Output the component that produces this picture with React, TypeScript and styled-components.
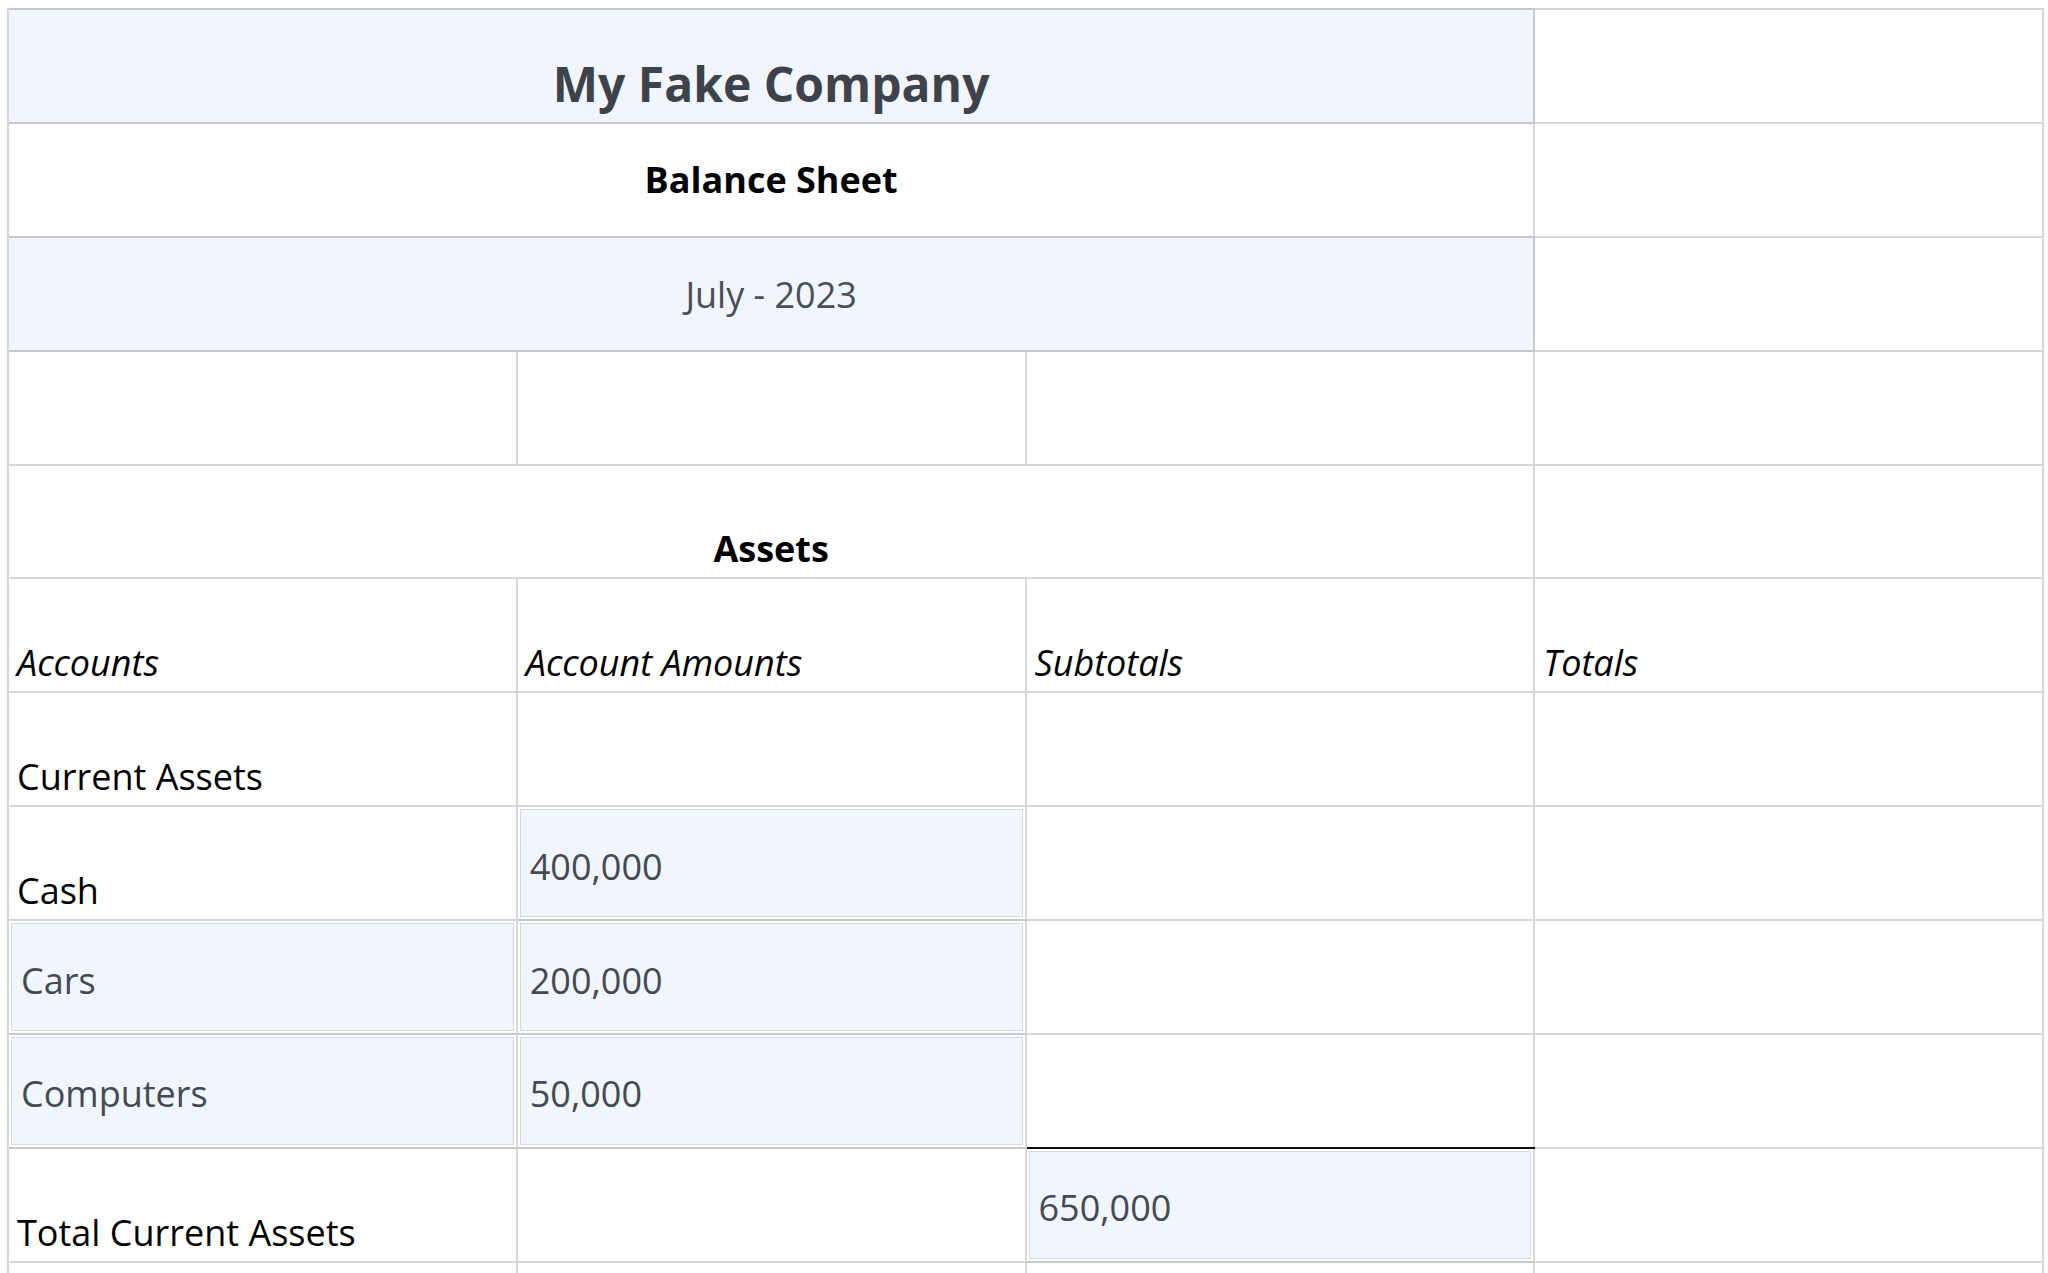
import React from 'react';
import styled, { createGlobalStyle } from 'styled-components';

const LINE = '#d8d8d8';
const DARK_LINE = '#c6c8cc';
const SHADE = '#f1f5fe';

const Global = createGlobalStyle`
  html, body { margin: 0; padding: 0; background: #ffffff; }
  body { font-family: "Open Sans", "Liberation Sans", sans-serif; }
`;

const Sheet = styled.div`
  display: grid;
  grid-template-columns: repeat(4, 508.75px);
  grid-auto-rows: 113.9px;
  width: max-content;
  margin: 8px 0 0 7px;
  border-top: 2px solid ${LINE};
  border-left: 2px solid ${LINE};
`;

type CellProps = {
  $span?: number;
  $v?: 'center' | 'bottom';
  $h?: 'left' | 'center';
  $tone?: 'plain' | 'header';
  $bare?: boolean;
  $rule?: boolean;
  $padTop?: number;
  $padBottom?: number;
};

const Cell = styled.div<CellProps>`
  grid-column: span ${(p) => p.$span ?? 1};
  box-sizing: border-box;
  min-width: 0;
  display: flex;
  align-items: ${(p) => (p.$v === 'center' ? 'center' : 'flex-end')};
  justify-content: ${(p) => (p.$h === 'center' ? 'center' : 'flex-start')};
  padding: ${(p) =>
    p.$bare ? '0' : `${p.$padTop ?? 0}px 8px ${p.$padBottom ?? 4}px 8px`};
  background: ${(p) => (p.$tone === 'header' ? SHADE : '#ffffff')};
  border-right: 2px solid ${(p) => (p.$tone === 'header' ? DARK_LINE : LINE)};
  border-bottom: 2px solid ${(p) => (p.$tone === 'header' || p.$bare ? DARK_LINE : LINE)};
  box-shadow: ${(p) =>
    p.$rule ? '0 -2px 0 #111111' : p.$tone === 'header' ? `0 -2px 0 ${DARK_LINE}` : 'none'};
`;

const Title = styled.span`
  font-size: 48px;
  font-weight: 700;
  color: #3e424b;
  white-space: nowrap;
`;

const Heading = styled.span`
  font-size: 36px;
  font-weight: 700;
  color: #000000;
  white-space: nowrap;
`;

const Period = styled.span`
  font-size: 36px;
  font-weight: 400;
  color: #4a4e58;
  white-space: nowrap;
`;

const Label = styled.span<{ $italic?: boolean }>`
  font-size: 36px;
  font-weight: 400;
  font-style: ${(p) => (p.$italic ? 'italic' : 'normal')};
  color: #000000;
  white-space: nowrap;
`;

const Field = styled.div`
  flex: 1;
  align-self: stretch;
  box-sizing: border-box;
  margin: 2px;
  border: 1px solid #d4d8df;
  background: ${SHADE};
  display: flex;
  align-items: center;
  padding: 6px 9px 0 9px;
  font-size: 36px;
  color: #454954;
  white-space: nowrap;
`;

const Empty = () => <Cell />;

export default function App() {
  return (
    <>
      <Global />
      <Sheet>
        <Cell $span={3} $h="center" $tone="header" $padBottom={6}>
          <Title>My Fake Company</Title>
        </Cell>
        <Empty />

        <Cell $span={3} $h="center" $v="center" $padTop={4}>
          <Heading>Balance Sheet</Heading>
        </Cell>
        <Empty />

        <Cell $span={3} $h="center" $v="center" $tone="header" $padTop={6}>
          <Period>July - 2023</Period>
        </Cell>
        <Empty />

        <Empty />
        <Empty />
        <Empty />
        <Empty />

        <Cell $span={3} $h="center">
          <Heading>Assets</Heading>
        </Cell>
        <Empty />

        <Cell><Label $italic>Accounts</Label></Cell>
        <Cell><Label $italic>Account Amounts</Label></Cell>
        <Cell><Label $italic>Subtotals</Label></Cell>
        <Cell><Label $italic>Totals</Label></Cell>

        <Cell><Label>Current Assets</Label></Cell>
        <Empty />
        <Empty />
        <Empty />

        <Cell><Label>Cash</Label></Cell>
        <Cell $bare><Field>400,000</Field></Cell>
        <Empty />
        <Empty />

        <Cell $bare><Field>Cars</Field></Cell>
        <Cell $bare><Field>200,000</Field></Cell>
        <Empty />
        <Empty />

        <Cell $bare><Field>Computers</Field></Cell>
        <Cell $bare><Field>50,000</Field></Cell>
        <Empty />
        <Empty />

        <Cell><Label>Total Current Assets</Label></Cell>
        <Empty />
        <Cell $bare $rule><Field>650,000</Field></Cell>
        <Empty />

        <Empty />
        <Empty />
        <Empty />
        <Empty />
      </Sheet>
    </>
  );
}
